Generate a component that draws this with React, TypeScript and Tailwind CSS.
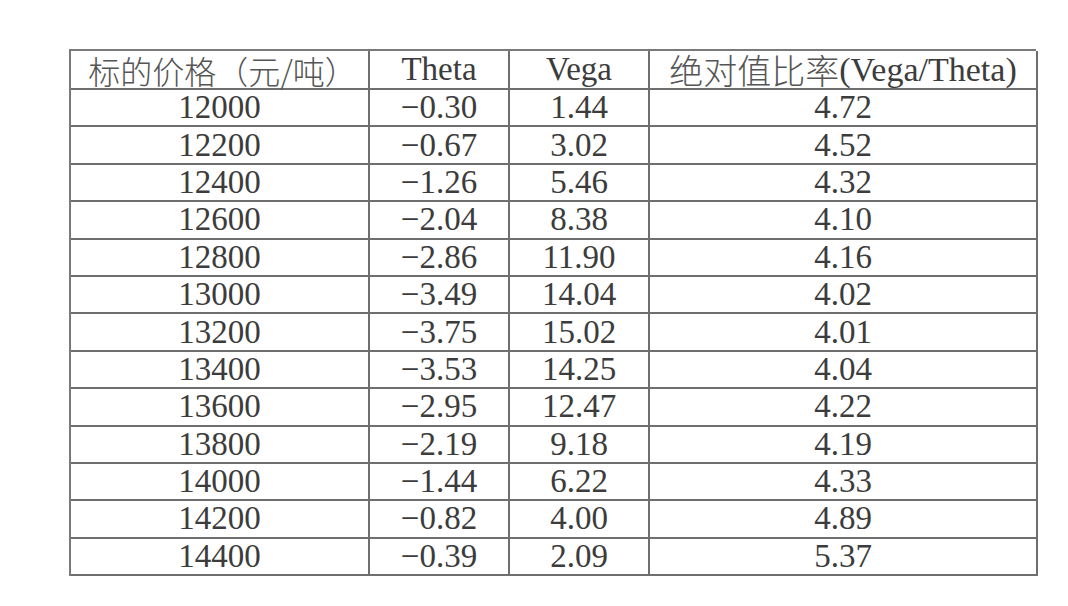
const rows: [string, string, string, string][] = [
  ["12000", "−0.30", "1.44", "4.72"],
  ["12200", "−0.67", "3.02", "4.52"],
  ["12400", "−1.26", "5.46", "4.32"],
  ["12600", "−2.04", "8.38", "4.10"],
  ["12800", "−2.86", "11.90", "4.16"],
  ["13000", "−3.49", "14.04", "4.02"],
  ["13200", "−3.75", "15.02", "4.01"],
  ["13400", "−3.53", "14.25", "4.04"],
  ["13600", "−2.95", "12.47", "4.22"],
  ["13800", "−2.19", "9.18", "4.19"],
  ["14000", "−1.44", "6.22", "4.33"],
  ["14200", "−0.82", "4.00", "4.89"],
  ["14400", "−0.39", "2.09", "5.37"],
];

const cell =
  "flex items-center justify-center border-r-2 border-b-2 border-[#6e6e6e] leading-none";

export default function App() {
  return (
    <div className="h-[606px] w-[1068px] bg-white pl-[69px] pt-[49px] text-[#3c3c3c] [font-family:'Liberation_Serif','Noto_Sans_CJK_SC',serif]">
      <div className="grid w-[967px] grid-cols-[299px_140px_140px_388px] border-l-2 border-t-2 border-[#7a7a7a]">
        <div className={`${cell} h-[39px] pl-[6px] text-[32px] font-light text-[#555] [font-family:'Noto_Sans_CJK_SC',sans-serif]`}>
          标的价格（元/吨）
        </div>
        <div className={`${cell} h-[39px] text-[33px]`}>Theta</div>
        <div className={`${cell} h-[39px] text-[33px]`}>Vega</div>
        <div className={`${cell} h-[39px] text-[34px]`}>
          <span className="font-light text-[#555] [font-family:'Noto_Sans_CJK_SC',sans-serif] text-[34px]">
            绝对值比率
          </span>
          <span>(Vega/Theta)</span>
        </div>
        {rows.map((r) =>
          r.map((v, i) => (
            <div key={r[0] + i} className={`${cell} h-[37.4px] text-[33px]`}>
              {v}
            </div>
          )),
        )}
      </div>
    </div>
  );
}
